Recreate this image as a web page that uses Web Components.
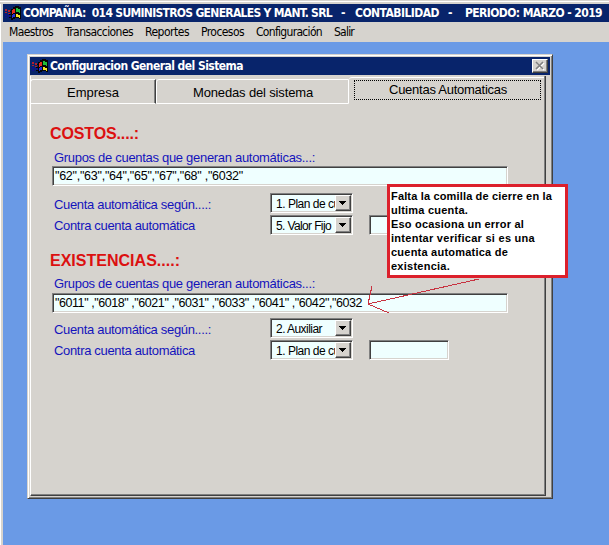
<!DOCTYPE html>
<html lang="es"><head><meta charset="utf-8"><title>Contabilidad</title>
<style>
html,body{margin:0;width:609px;height:545px;overflow:hidden;background:#6a9ae6}
body{font-family:"Liberation Sans",Arial,sans-serif;font-size:13px;color:#000}
</style></head><body>
<main-app></main-app>
<script>
const define=(name,html,setup)=>customElements.define(name,class extends HTMLElement{
  constructor(){super();this.attachShadow({mode:'open'});}
  connectedCallback(){
    this.shadowRoot.innerHTML=html;
    if(setup)setup(this,this.shadowRoot);
  }
});

// Text run spaced out to a given width in pixels.
define('fit-text',`<style>:host{display:inline-block;white-space:pre}span{display:inline-block}</style><span></span>`,(el,r)=>{
  const s=r.querySelector('span');s.textContent=el.getAttribute('text');
  const n=s.textContent.length,w=+el.getAttribute('w');
  s.style.letterSpacing=((w-s.getBoundingClientRect().width)/n)+'px';
});

define('win-logo',`<style>:host{display:block;width:18px;height:15px}svg{display:block}</style>
<svg width="18" height="15" viewBox="0 0 18 15" shape-rendering="crispEdges">
<path fill="#050505" d="M7 3h2V1h2V0h4v1h2v12h-2v-1h-4v1H9v1H7v-2H5v-1h2V9H5V8h2V6H5V5h2z"/>
<path fill="#b02030" d="M1 3h2v2H1zM4 4h2v2H4zM1 6h2v1H1zM4 7h2v1H4z"/><path fill="#101090" d="M1 8h2v2H1zM4 9h2v2H4zM1 11h2v1H1z"/>
<path fill="#e02b20" d="M8 4h1V3h2v4H9v1H8z"/><path fill="#20bd38" d="M12 2h2v1h2v4h-1V6h-3z"/>
<path fill="#2430d8" d="M8 9h1V8h2v3H9v1H8z"/><path fill="#f1df25" d="M12 8h2v1h2v3h-1v-1h-3z"/></svg>`);

define('menu-bar',`<style>:host{display:flex;height:20px;background:#d6d3ce;padding-left:6px;font:12px/20px "DejaVu Sans Condensed","DejaVu Sans",sans-serif;gap:12px}</style>
<fit-text w="44" text="Maestros"></fit-text><fit-text w="68" text="Transacciones"></fit-text><fit-text w="44" text="Reportes"></fit-text><fit-text w="43" text="Procesos"></fit-text><fit-text w="66" text="Configuración"></fit-text><fit-text w="20" text="Salir"></fit-text>`);

define('text-field',`<style>:host{display:block;box-sizing:border-box;height:20px;background:#efffff;border:1px solid;border-color:#808080 #fff #fff #808080;box-shadow:inset 1px 1px #404040,inset -1px -1px #d6d3ce;font-size:12.5px;line-height:18px;padding-left:2px}</style><slot></slot>`);

define('combo-box',`<style>
:host{display:flex;box-sizing:border-box;width:83px;height:20px;background:#efffff;border:1px solid;border-color:#808080 #fff #fff #808080;box-shadow:inset 1px 1px #404040,inset -1px -1px #d6d3ce;font-size:12px;padding:1px;justify-content:space-between}
.t{width:63px;overflow:hidden;padding-left:4px;box-sizing:border-box;line-height:18px}
.b{width:16px;height:16px;box-sizing:border-box;background:#d6d3ce;border:1px solid;border-color:#fff #404040 #404040 #fff;box-shadow:inset -1px -1px #808080;}
svg{display:block}</style>
<div class="t"><slot></slot></div><div class="b"><svg width="14" height="14" shape-rendering="crispEdges"><path d="M3 5h7v1H9v1H8v1H7v1H6V8H5V7H4V6H3z"/></svg></div>`);

define('account-group',`<style>
:host{display:block;color:#1414bc}
h2{margin:0 0 0 20px;font-size:16px;line-height:20px;height:20px;color:#dc1010}
.l{margin-left:24px;height:16px;line-height:18px;overflow:hidden}
.g{margin-top:var(--label-gap,5px)}
text-field{color:#000}
.wide{width:456px;margin:var(--field-gap,1px) 0 0 22px}
.form{display:grid;grid-template-columns:216px 99px 80px;grid-template-rows:20px 20px;row-gap:2px;margin:var(--form-gap,7px) 0 0 24px}
.form .l{margin:3px 0 0}
.form .l.c{margin-top:2px;grid-column:1}
combo-box{color:#000}.form text-field{grid-column:3;grid-row:2}
</style>
<h2></h2><div class="l g"><fit-text w="261" text="Grupos de cuentas que generan automáticas...:"></fit-text></div>
<text-field class="wide"></text-field>
<div class="form"><div class="l"><fit-text w="157" text="Cuenta automática según....:"></fit-text></div><combo-box class="a"></combo-box>
<div class="l c"><fit-text w="141" text="Contra cuenta automática"></fit-text></div><combo-box class="b"></combo-box><text-field></text-field></div>`,(el,r)=>{
  const put=(sel,name)=>{const [w,t]=el.getAttribute(name).split('|');const f=document.createElement('fit-text');f.setAttribute('w',w);f.setAttribute('text',t);r.querySelector(sel).append(f);};
  put('h2','heading');put('.wide','accounts');put('.a','first');put('.b','second');
});

define('tab-strip',`<style>
:host{display:flex;height:28px;line-height:25px}
div{box-sizing:border-box;text-align:center}
.t{margin-top:3px;height:25px;border:1px solid #fff;border-right:0;border-radius:3px 0 0 0}
.one{width:126px;border-right:1px solid #404040;box-shadow:inset -1px 0 #808080}
.two{width:193px;border-right:1px solid #fff;padding-left:1px}
.three{flex:1;margin-top:1px;height:27px;border-top:1px solid #fff;border-radius:3px 0 0 0;padding:2px 3px 0 5px}
.focus{height:20px;border:1px dotted #000;line-height:17px;padding-left:1px}
</style><div class="t one"><fit-text w="52" text="Empresa"></fit-text></div><div class="t two"><fit-text w="120" text="Monedas del sistema"></fit-text></div><div class="three"><div class="focus"><fit-text w="118" text="Cuentas Automaticas"></fit-text></div></div>`);

define('config-window',`<style>
:host{display:block;box-sizing:border-box;width:526px;height:445px;margin:12px 0 0 24px;background:#d6d3ce;border:1px solid;border-color:#d6d3ce #404040 #404040 #d6d3ce;box-shadow:inset 1px 1px #fff,inset -1px -1px #808080;padding:2px}
header{display:flex;align-items:center;height:18px;background:#08246b;color:#fff;font:bold 12px/18px "DejaVu Sans Condensed","DejaVu Sans",sans-serif;padding:0 2px 0 1px}
header fit-text{flex:1;margin-left:1px}
.x{width:16px;height:14px;box-sizing:border-box;background:#d6d3ce;border:1px solid;border-color:#fff #404040 #404040 #fff;box-shadow:inset -1px -1px #808080}
svg{display:block}
main{box-sizing:border-box;width:516px;height:420px;border:solid;border-width:0 1px 1px;border-color:#fff #404040 #404040 #fff;box-shadow:inset -1px -1px #808080;margin-top:1px}
tab-strip{margin:0 1px 0 -1px}
account-group{margin:20px 0 0 -1px}
.second{margin-top:16px;--label-gap:4px;--field-gap:2px;--form-gap:5px}
</style><header><win-logo></win-logo><fit-text w="193" text="Configuracion General del Sistema"></fit-text><div class="x"><svg width="14" height="12"><path d="M4 3l7 7M11 3l-7 7" stroke="#fff" stroke-width="1.5"/><path d="M3 2l7 7M10 2l-7 7" stroke="#808080" stroke-width="1.6"/></svg></div></header>
<main><tab-strip></tab-strip>
<account-group heading='89|COSTOS....:' accounts='188|"62","63","64","65","67","68" ,"6032"' first='70|1. Plan de cue' second='55|5. Valor Fijo'></account-group>
<account-group class="second" heading='130|EXISTENCIAS....:' accounts='307|"6011" ,"6018" ,"6021" ,"6031" ,"6033" ,"6041" ,"6042","6032' first='46|2. Auxiliar' second='70|1. Plan de cue'></account-group></main>`);

define('note-callout',`<style>
:host{position:absolute;left:387px;top:184px;width:181px;height:94px;box-sizing:border-box;border:3px solid #dc202c;background:#fff;font-weight:bold;font-size:11px;line-height:14px;padding:2px 0 0 1px}
fit-text{display:block;height:14px}
svg{position:absolute;left:-25px;top:92px;overflow:visible}
</style><fit-text w="161" text="Falta la comilla de cierre en la"></fit-text><fit-text w="77" text="ultima cuenta."></fit-text><fit-text w="133" text="Eso ocasiona un error al"></fit-text><fit-text w="144" text="intentar verificar si es una"></fit-text><fit-text w="117" text="cuenta automatica de"></fit-text><fit-text w="59" text="existencia."></fit-text>
<svg width="120" height="40" fill="none" stroke="#c83240" shape-rendering="crispEdges"><path d="M114 0L3 25M7 7L3 25L24 34"/></svg>`);

define('main-app',`<style>
:host{display:block;position:relative;box-sizing:border-box;width:609px;height:545px;padding-left:3px;background:linear-gradient(90deg,#fff 0 1px,#d6d3ce 1px 3px,#6a9ae6 3px)}
.top{height:4px;margin-left:-3px;box-sizing:border-box;background:#d6d3ce;border-top:1px solid #d6d3ce;box-shadow:inset 0 1px #fff}
header{display:grid;grid-template-columns:19px 318px 14px 93px 17px 1fr;align-items:center;height:18px;background:#08246b;color:#fff;font:bold 12px/18px "DejaVu Sans Condensed","DejaVu Sans",sans-serif;padding-left:1px}
</style><div class="top"></div><header><win-logo></win-logo><fit-text w="309" text="COMPAÑIA:  014 SUMINISTROS GENERALES Y MANT. SRL"></fit-text><fit-text w="5" text="-"></fit-text><fit-text w="84" text="CONTABILIDAD"></fit-text><fit-text w="5" text="-"></fit-text><fit-text w="137" text="PERIODO: MARZO - 2019"></fit-text></header><menu-bar></menu-bar><config-window></config-window><note-callout></note-callout>`);
</script></body></html>
